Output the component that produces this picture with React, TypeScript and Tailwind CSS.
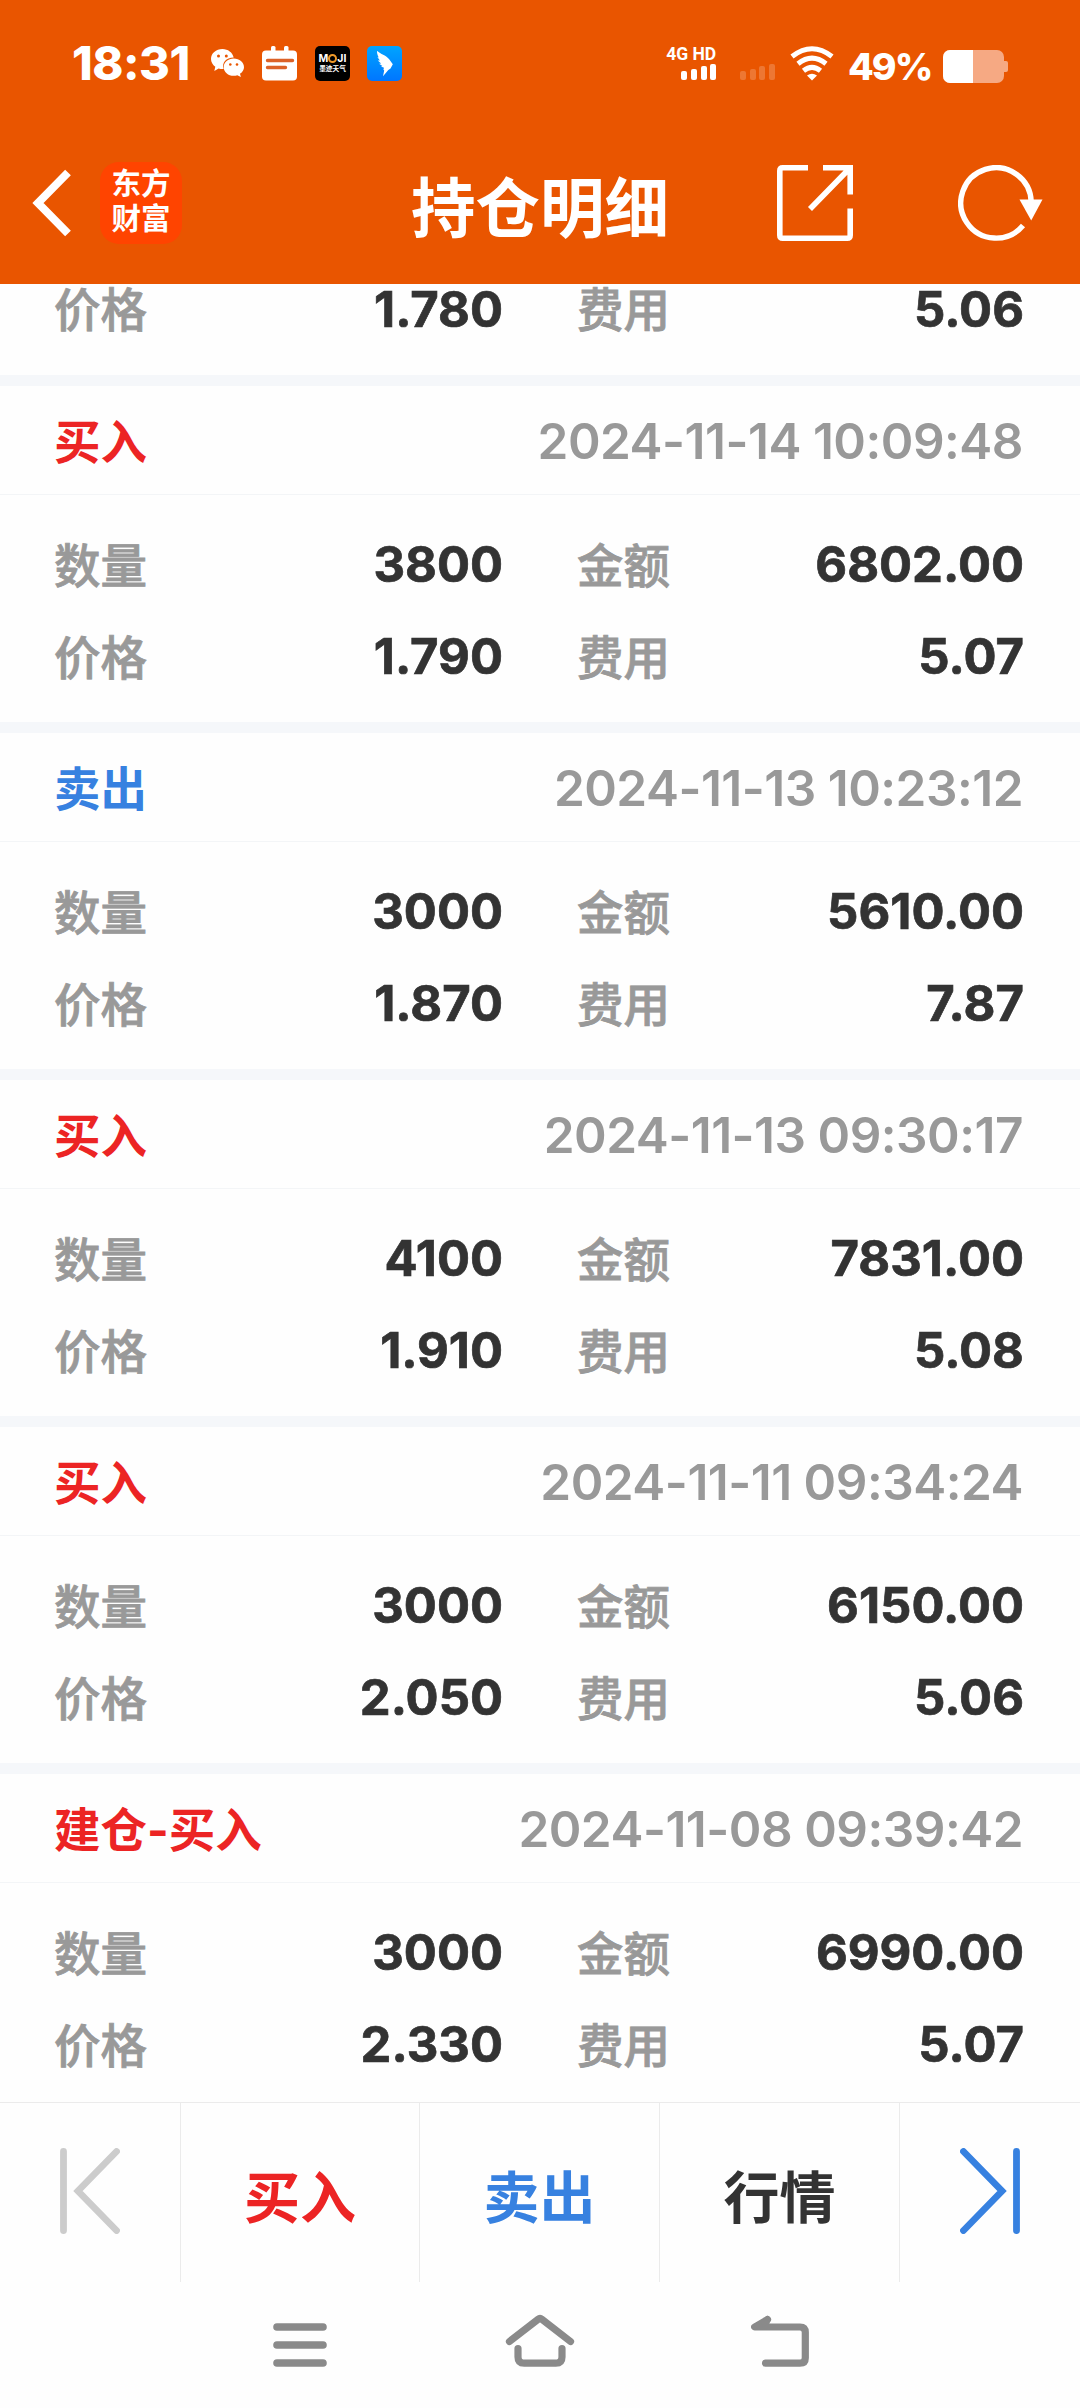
type Trade = {
  side: string;
  buy: boolean;
  time: string;
  qty: string;
  amount: string;
  price: string;
  fee: string;
};

const trades: Trade[] = [
  { side: "买入", buy: true, time: "2024-11-14 10:09:48", qty: "3800", amount: "6802.00", price: "1.790", fee: "5.07" },
  { side: "卖出", buy: false, time: "2024-11-13 10:23:12", qty: "3000", amount: "5610.00", price: "1.870", fee: "7.87" },
  { side: "买入", buy: true, time: "2024-11-13 09:30:17", qty: "4100", amount: "7831.00", price: "1.910", fee: "5.08" },
  { side: "买入", buy: true, time: "2024-11-11 09:34:24", qty: "3000", amount: "6150.00", price: "2.050", fee: "5.06" },
  { side: "建仓-买入", buy: true, time: "2024-11-08 09:39:42", qty: "3000", amount: "6990.00", price: "2.330", fee: "5.07" },
];

function SignalBars({ className }: { className: string }) {
  return (
    <div className={`flex h-4 items-end gap-[3.6px] ${className}`}>
      <i className="h-[9px] w-1.5 rounded-[2px] bg-white" />
      <i className="h-[10.5px] w-1.5 rounded-[2px] bg-white" />
      <i className="h-[13.5px] w-1.5 rounded-[2px] bg-white" />
      <i className="h-4 w-1.5 rounded-[2px] bg-white" />
    </div>
  );
}

function StatusBar() {
  return (
    <div className="flex h-[126px] items-center pr-[72px] pl-[72px] text-white">
      <span className="w-[119px] text-[47px] font-extrabold tracking-[-0.5px] whitespace-nowrap">18:31</span>
      <svg className="ml-5 h-7 w-[33px]" viewBox="0 0 33 28" fill="#fff">
        <path d="M11.5 0C5 0 0 4.400 0 10c0 3.200 1.700 5.900 4.300 7.700L3.300 22l4.300-2.600c1.500.4 3.100.6 5 .5C10.500 14 15 8.600 22.700 8.500 21.500 3.500 17 0 11.500 0z" />
        <path d="M22.700 9.600c-5.600 0-10 3.800-10 8.600s4.400 8.600 10 8.600c1.300 0 2.500-.2 3.600-.6l3.600 1.800-.9-3.300c2.500-1.600 4-4 4-6.500 0-4.800-4.600-8.600-10.300-8.600z" />
        <g fill="#e95500">
          <circle cx="7.500" cy="7" r="1.500" />
          <circle cx="15.300" cy="7" r="1.500" />
          <circle cx="19.300" cy="15.500" r="1.300" />
          <circle cx="26" cy="15.500" r="1.300" />
        </g>
      </svg>
      <svg className="ml-[18px] h-[35px] w-[35px]" viewBox="0 0 35 35">
        <rect y="4.500" width="35" height="30" rx="4" fill="#fff" />
        <rect x="9" y="0" width="4.500" height="8" rx="1.500" fill="#fff" />
        <rect x="22" y="0" width="4.500" height="8" rx="1.500" fill="#fff" />
        <path d="M5.500 14.500H30.500M5.500 21.500H23.500" stroke="#dc6127" strokeWidth="3.400" strokeLinecap="round" />
      </svg>
      <div className="ml-[18px] flex h-[35px] w-[35px] flex-col items-center justify-center rounded-[5px] bg-black leading-none">
        <div className="flex h-[10px] items-center text-[10.5px] leading-[10px] font-bold">
          M<i className="size-[9px] rounded-full border-2 border-[#f09a2a]" />JI
        </div>
        <div className="mt-px h-2 text-[6.7px] leading-2 font-bold whitespace-nowrap">墨迹天气</div>
      </div>
      <svg className="ml-[17px] h-[35px] w-[35px]" viewBox="0 0 35 35">
        <defs>
          <linearGradient id="wing" x2="0" y2="1">
            <stop stopColor="#00a4ff" />
            <stop offset="1" stopColor="#0076ff" />
          </linearGradient>
        </defs>
        <rect width="35" height="35" rx="5" fill="url(#wing)" />
        <path d="M10.200 5c3.500 3.200 8.500 4 11.800 8l3.800 5.200-2.300 4.300-2.200 1.500-5.300 6.300 1.200-5.700-.8-1.200.6-1.700-3-1.300 1.400-.5-3.300-2.200 2-.2-3.300-3 2.100.1-2.500-3.500 1.400.3c-1.200-1.900-1.900-4.100-1.800-6.400z" fill="#fff" />
      </svg>

      <div className="mr-6 ml-auto flex flex-col items-end">
        <span className="font-['Roboto'] text-[17.500px] leading-[14px] font-bold whitespace-nowrap">4G HD</span>
        <SignalBars className="mt-[3px]" />
      </div>
      <SignalBars className="mt-[17px] mr-[15px] opacity-20" />
      <svg className="h-[35px] w-11" viewBox="0 0 44 35" fill="none" stroke="#fff" strokeWidth="5">
        <path d="M2 10.500Q22 -5 42 10.500" />
        <path d="M8 17.800Q22 6.500 36 17.800" />
        <path d="M13.500 24.800Q22 18 30.500 24.800" />
        <path d="M22 34.500L17 29.500Q22 26 27 29.500Z" fill="#fff" stroke="none" />
      </svg>
      <span className="mt-2 ml-3.5 w-[87px] text-[37.5px] font-extrabold tracking-[-2px] whitespace-nowrap">49%</span>
      <div className="mt-1.5 ml-2 flex shrink-0 items-center">
        <div className="h-[33px] w-[61px] overflow-hidden rounded-[7px] bg-[#f6a983]">
          <div className="h-full w-[30px] bg-white" />
        </div>
        <div className="h-[11px] w-1 rounded-r-[2px] bg-[#f6a983]" />
      </div>
    </div>
  );
}

function TitleBar() {
  return (
    <div className="grid h-[158px] grid-cols-[1fr_auto_1fr] items-center pb-1 text-white">
      <div className="flex items-center gap-[29px] pl-8">
        <svg className="h-[68px] w-[39px]" viewBox="0 0 39 68" fill="none" stroke="#fff" strokeWidth="8">
          <path d="M36 3.500L6 34L36 64.500" />
        </svg>
        <div className="flex size-[82px] flex-col items-center justify-center rounded-[19px] bg-[#ff4400] pb-1 text-[29.500px] leading-[35px] font-bold">
          <span>东方</span>
          <span>财富</span>
        </div>
      </div>
      <h1 className="mt-0.5 font-['Noto_Sans_CJK_SC',sans-serif] text-[64.500px] leading-[94px] font-bold">持仓明细</h1>
      <div className="flex items-center justify-end pr-[37px]">
        <svg className="h-[76px] w-[76px]" viewBox="0 0 76 76" fill="none" stroke="#fff" strokeWidth="5.600">
          <path d="M31 2.800H5.800Q2.800 2.800 2.800 5.800V70.200Q2.800 73.200 5.800 73.200H70.200Q73.200 73.200 73.200 70.200V43.500" />
          <path d="M46 2.800H73.200V29.500M72 4L33 44" />
        </svg>
        <svg className="ml-[105px] h-[76px] w-[85px]" viewBox="0 0 85 76">
          <path d="M73.200 37A35.200 35.200 0 1 0 65 60.500" fill="none" stroke="#fff" strokeWidth="5.400" />
          <path d="M61.500 34.500H84.500L73.200 55.500Z" fill="#fff" />
        </svg>
      </div>
    </div>
  );
}

function Field({ label, value }: { label: string; value: string }) {
  return (
    <div className="flex items-center justify-between leading-[50px]">
      <span className="pb-[5px] font-['Noto_Sans_CJK_SC',sans-serif] text-[46.500px] font-medium text-[#999] [-webkit-text-stroke:0.8px_#999]">
        {label}
      </span>
      <span className="text-[49px] font-bold text-[#333] [-webkit-text-stroke:0.7px_#333]">{value}</span>
    </div>
  );
}

function TradeCard({ trade }: { trade: Trade }) {
  return (
    <section className="shrink-0 border-t-[11px] border-[#f5f7fa]">
      <div className="flex h-[109px] items-center justify-between border-b border-[#f3f5f7] pt-0.5 pr-[57px] pl-[54px]">
        <span className={`pt-[3px] text-[46.500px] font-bold ${trade.buy ? "text-[#ec2424]" : "text-[#3781e0]"}`}>
          {trade.side}
        </span>
        <span className="text-[49.500px] font-semibold tracking-[-0.5px] text-[#999]">{trade.time}</span>
      </div>
      <div className="grid h-[227px] grid-cols-[449px_447px] grid-rows-[92px_92px] gap-x-[74px] pt-6 pl-[54px]">
        <Field label="数量" value={trade.qty} />
        <Field label="金额" value={trade.amount} />
        <Field label="价格" value={trade.price} />
        <Field label="费用" value={trade.fee} />
      </div>
    </section>
  );
}

function ActionBar() {
  return (
    <footer className="grid h-[180px] shrink-0 grid-cols-[181px_239px_240px_240px_180px] divide-x divide-[#ebebeb] border-t border-[#ebebeb] text-[56px] font-bold">
      <div className="flex items-center justify-center pb-1">
        <svg className="h-[86px] w-[60px]" viewBox="0 0 60 86" fill="none" stroke="#ccc" strokeWidth="6.800" strokeLinecap="round">
          <path d="M3.500 3.500V82.500M56.500 3.500L18 43L56.500 82.500" />
        </svg>
      </div>
      <div className="flex items-center justify-center pt-2.5 text-[#ec2424]">买入</div>
      <div className="flex items-center justify-center pt-2.5 text-[#3781e0]">卖出</div>
      <div className="flex items-center justify-center pt-2.5 text-[#333]">行情</div>
      <div className="flex items-center justify-center pb-1">
        <svg className="h-[86px] w-[60px]" viewBox="0 0 60 86" fill="none" stroke="#3781e0" strokeWidth="6.800" strokeLinecap="round">
          <path d="M56.500 3.500V82.500M3.500 3.500L42 43L3.500 82.500" />
        </svg>
      </div>
    </footer>
  );
}

function SystemNav() {
  return (
    <nav className="flex h-[126px] pt-[31px] pl-[273px]">
      <svg className="h-[54px] w-[54px]" viewBox="0 0 54 54" stroke="#8a8a8a" strokeWidth="7.600" strokeLinecap="round">
        <path d="M4 14H50M4 32H50M4 50H50" />
      </svg>
      <svg className="ml-[178px] h-[54px] w-[70px]" viewBox="0 0 70 54" fill="none" stroke="#8a8a8a" strokeWidth="7.200" strokeLinecap="round" strokeLinejoin="round">
        <path d="M4.500 28.500L33 6.300Q35 4.800 37 6.300L65.500 28.500" />
        <path d="M13 35.500V44Q13 50.200 19.200 50.200H50.800Q57 50.200 57 44V35.500" />
      </svg>
      <svg className="ml-[176px] h-[54px] w-[58px]" viewBox="0 0 58 54" fill="none" stroke="#8a8a8a" strokeWidth="7.200" strokeLinecap="round" strokeLinejoin="round">
        <path d="M16.500 6.500L3.700 14H49Q54.300 14 54.300 19.300V44.900Q54.300 50.200 49 50.200H14.500M16.500 6.500L13 12.500" />
      </svg>
    </nav>
  );
}

export default function App() {
  return (
    <div className="flex h-[2408px] w-[1080px] flex-col overflow-hidden bg-[#fefefe] font-['Inter','Noto_Sans_CJK_SC',sans-serif]">
      <header className="h-[284px] shrink-0 bg-[#e95500]">
        <StatusBar />
        <TitleBar />
      </header>
      <main className="flex h-[1818px] shrink-0 flex-col">
        {/* tail of the record scrolled under the header */}
        <div className="grid h-[91px] shrink-0 grid-cols-[449px_447px] grid-rows-[51px] gap-x-[74px] pl-[54px]">
          <Field label="价格" value="1.780" />
          <Field label="费用" value="5.06" />
        </div>
        {trades.map((trade) => (
          <TradeCard key={trade.time} trade={trade} />
        ))}
      </main>
      <ActionBar />
      <SystemNav />
    </div>
  );
}
